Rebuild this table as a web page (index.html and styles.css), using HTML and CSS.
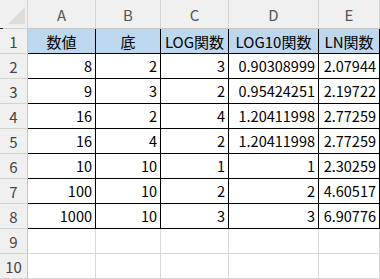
FILE: index.html
```html
<!DOCTYPE html>
<html lang="ja">
<head>
<meta charset="utf-8">
<link rel="stylesheet" href="styles.css">
</head>
<body>
<div class="sheet">
  <div class="corner"><svg width="28" height="29" viewBox="0 0 28 29"><polygon points="8,24 25,24 25,7" fill="#dcdcdc"/></svg><span class="tick"></span></div>
  <div class="ch">A</div><div class="ch">B</div><div class="ch">C</div><div class="ch">D</div><div class="ch">E</div>

  <div class="rh">1</div>
  <div class="c h">数値</div><div class="c h">底</div><div class="c h">LOG関数</div><div class="c h">LOG10関数</div><div class="c h">LN関数</div>

  <div class="rh">2</div>
  <div class="c">8</div><div class="c">2</div><div class="c">3</div><div class="c">0.90308999</div><div class="c">2.07944</div>

  <div class="rh">3</div>
  <div class="c">9</div><div class="c">3</div><div class="c">2</div><div class="c">0.95424251</div><div class="c">2.19722</div>

  <div class="rh">4</div>
  <div class="c">16</div><div class="c">2</div><div class="c">4</div><div class="c">1.20411998</div><div class="c">2.77259</div>

  <div class="rh">5</div>
  <div class="c">16</div><div class="c">4</div><div class="c">2</div><div class="c">1.20411998</div><div class="c">2.77259</div>

  <div class="rh">6</div>
  <div class="c">10</div><div class="c">10</div><div class="c">1</div><div class="c">1</div><div class="c">2.30259</div>

  <div class="rh">7</div>
  <div class="c">100</div><div class="c">10</div><div class="c">2</div><div class="c">2</div><div class="c">4.60517</div>

  <div class="rh">8</div>
  <div class="c">1000</div><div class="c">10</div><div class="c">3</div><div class="c">3</div><div class="c">6.90776</div>

  <div class="rh">9</div>
  <div class="e"></div><div class="e"></div><div class="e"></div><div class="e"></div><div class="e"></div>

  <div class="rh">10</div>
  <div class="e"></div><div class="e"></div><div class="e"></div><div class="e"></div><div class="e"></div>
</div>
</body>
</html>
```

FILE: styles.css
```css
* { box-sizing: border-box; }
html, body { margin: 0; padding: 0; background: #fff; }
body {
  font-family: "Noto Sans CJK JP", "Noto Sans", sans-serif;
  font-size: 14px;
  color: #000;
  overflow: hidden;
}
.sheet {
  display: grid;
  grid-template-columns: 28px 68px 65px 68px 90px 61px;
  grid-template-rows: 29px repeat(10, 25px);
  width: 380px;
  height: 279px;
}
.corner {
  position: relative;
  background: #f0f0f0;
  border-right: 1px solid #d4d4d4;
  border-bottom: 1px solid #d4d4d4;
}
.corner svg { display: block; }
.tick {
  position: absolute;
  left: 0;
  bottom: -1px;
  width: 3px;
  height: 1px;
  background: #222;
}
.ch {
  background: #f0f0f0;
  color: #555;
  font-size: 15px;
  display: flex;
  align-items: center;
  justify-content: center;
  border-right: 1px solid #d4d4d4;
  border-bottom: 1px solid #c6c6c6;
}
.rh {
  background: #f0f0f0;
  color: #444;
  font-size: 15px;
  display: flex;
  align-items: center;
  justify-content: center;
  border-right: 1px solid #c6c6c6;
  border-bottom: 1px solid #d4d4d4;
}
.c {
  display: flex;
  align-items: center;
  justify-content: flex-end;
  padding-right: 3px;
  border-right: 1px solid #000;
  border-bottom: 1px solid #000;
  white-space: nowrap;
  line-height: 1;
  font-size: 14.5px;
}
.c.h {
  background: #bdd7ee;
  justify-content: center;
  padding-right: 0;
  font-size: 15px;
}
.e {
  border-right: 1px solid #d9d9d9;
  border-bottom: 1px solid #d9d9d9;
}
```
